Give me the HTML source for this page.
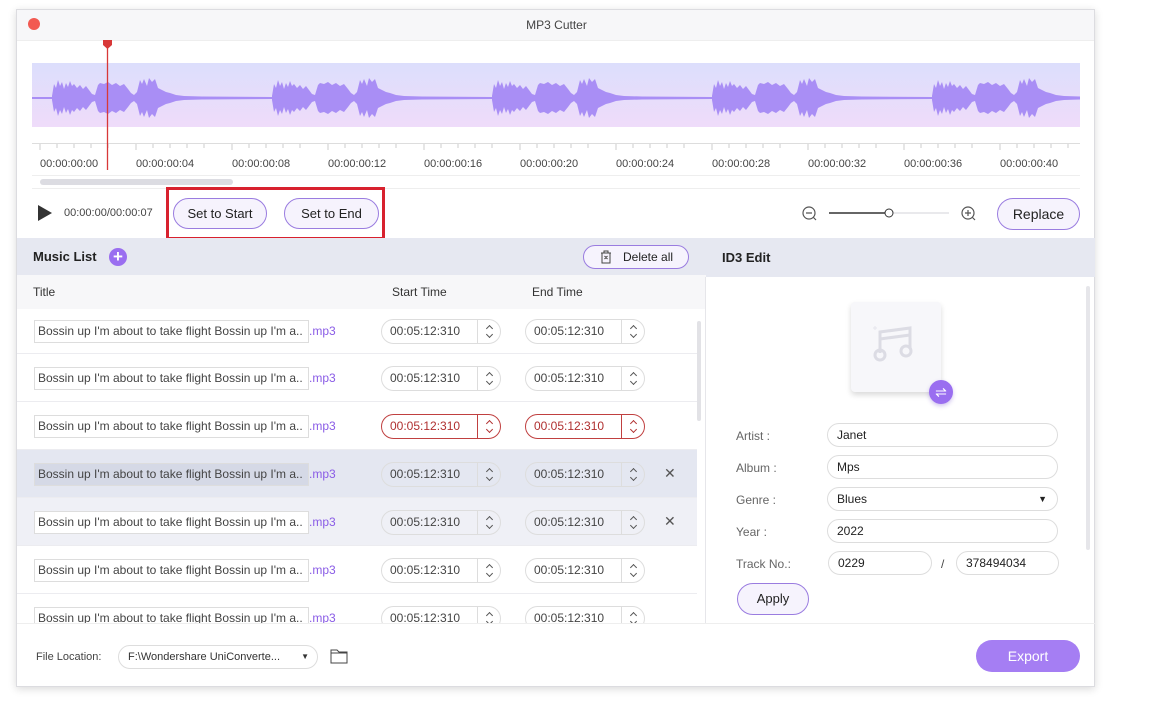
<!DOCTYPE html>
<html><head><meta charset="utf-8"><style>
*{box-sizing:border-box;margin:0;padding:0}
body{width:1152px;height:712px;background:#fff;font-family:"Liberation Sans",sans-serif;position:relative;overflow:hidden;color:#333}
.a{position:absolute}
.win{left:16px;top:9px;width:1079px;height:678px;border:1px solid #dcdce0;box-shadow:0 2px 8px rgba(0,0,0,.15);background:#fff;overflow:hidden}
.btn{position:absolute;border:1px solid #9a7ce0;border-radius:16px;background:#f6f3fd;font-size:13px;color:#222;text-align:center}
.row{position:absolute;left:0;width:680px;height:48px;border-bottom:1px solid #ececf0}
.ti{position:absolute;left:17px;top:11px;width:275px;height:23px;border:1px solid #ddd;background:#fff;font-size:12px;line-height:21px;padding-left:3px;color:#444;white-space:nowrap;overflow:hidden}
.mp{position:absolute;left:292px;top:11px;font-size:12px;line-height:23px;color:#8a5ce6}
.sp{position:absolute;top:10px;width:120px;height:25px;border:1px solid #ddd;border-radius:13px;background:#fff;font-size:12px;line-height:23px;padding-left:8px;color:#444}
.sp:after{content:"";position:absolute;left:95px;top:0;height:23px;border-left:1px solid #ddd}
.sp i{position:absolute;right:7px;top:5px;width:8px;height:13px;background:url('data:,') ;}
.sp i:before,.sp i:after{content:"";position:absolute;left:2px;width:4px;height:4px;border-left:1.5px solid #555;border-top:1.5px solid #555}
.sp i:before{top:1px;transform:rotate(45deg)}
.sp i:after{top:7px;transform:rotate(225deg)}
.sp.r{border-color:#c04040;color:#b03030}.sp.r:after{border-color:#c04040}.sp.r i:before,.sp.r i:after{border-color:#b03030}
.x{position:absolute;left:647px;top:13px;font-size:14px;color:#555}
.lb{position:absolute;left:736px;font-size:12px;color:#666}
.in{position:absolute;height:24px;border:1px solid #ddd;border-radius:12px;font-size:12px;line-height:22px;padding-left:9px;color:#222;background:#fff}
</style></head><body>
<div class="a win">
 <div class="a" style="left:0;top:0;width:1079px;height:31px;background:#f7f7f9;border-bottom:1px solid #eee"></div>
 <div class="a" style="left:11px;top:8px;width:12px;height:12px;border-radius:50%;background:#f25a52"></div>
 <div class="a" style="left:0;top:8px;width:1079px;text-align:center;font-size:12px;color:#444">MP3 Cutter</div>
</div>
<svg class="a" style="left:0;top:0" width="1152" height="240">
 <defs>
  <linearGradient id="g" x1="0" y1="0" x2="0" y2="1"><stop offset="0" stop-color="#dcdefc"/><stop offset="1" stop-color="#efdcfa"/></linearGradient>
  <clipPath id="c"><rect x="32" y="63" width="1048" height="64"/></clipPath>
  <path id="h" d="M0,0 L0,-2 2,-14 4,-10 6,-18 8,-12 10,-16 12,-9 14,-15 16,-11 18,-17 20,-12 22,-14 25,-10 28,-13 31,-9 34,-12 37,-8 40,-4 43,-3 46,-13 48,-15 52,-14 56,-16 60,-13 64,-15 68,-12 72,-14 76,-9 79,-5 82,-3 85,-6 88,-18 90,-14 92,-19 95,-12 97,-20 100,-16 103,-19 106,-10 110,-8 114,-6 118,-5 124,-3 132,-2 150,-1.5 220,-1 220,0 Z" fill="#a98ef5"/>
  <g id="p"><use href="#h"/><use href="#h" transform="scale(1,-1)"/></g>
 </defs>
 <rect x="32" y="63" width="1048" height="64" fill="url(#g)"/>
 <g clip-path="url(#c)">
 <rect x="32" y="97" width="1048" height="2" fill="#a98ef5"/>
 <use href="#p" transform="translate(52,98)"/>
 <use href="#p" transform="translate(272,98)"/>
 <use href="#p" transform="translate(492,98)"/>
 <use href="#p" transform="translate(712,98)"/>
 <use href="#p" transform="translate(932,98)"/>
 </g>
 <line x1="32" y1="143.5" x2="1080" y2="143.5" stroke="#ddd"/>
 <g stroke="#ccc">
  <path d="M40,144v6M57,144v4M74,144v4M91,144v4M108,144v4M136,144v6M153,144v4M170,144v4M187,144v4M204,144v4M232,144v6M249,144v4M266,144v4M283,144v4M300,144v4M328,144v6M345,144v4M362,144v4M379,144v4M396,144v4M424,144v6M441,144v4M458,144v4M475,144v4M492,144v4M520,144v6M537,144v4M554,144v4M571,144v4M588,144v4M616,144v6M633,144v4M650,144v4M667,144v4M684,144v4M712,144v6M729,144v4M746,144v4M763,144v4M780,144v4M808,144v6M825,144v4M842,144v4M859,144v4M876,144v4M904,144v6M921,144v4M938,144v4M955,144v4M972,144v4M1000,144v6M1017,144v4M1034,144v4M1051,144v4M1068,144v4"/>
 </g>
 <g font-family="Liberation Sans" font-size="11" fill="#444">
  <text x="40" y="167">00:00:00:00</text><text x="136" y="167">00:00:00:04</text><text x="232" y="167">00:00:00:08</text><text x="328" y="167">00:00:00:12</text><text x="424" y="167">00:00:00:16</text><text x="520" y="167">00:00:00:20</text><text x="616" y="167">00:00:00:24</text><text x="712" y="167">00:00:00:28</text><text x="808" y="167">00:00:00:32</text><text x="904" y="167">00:00:00:36</text><text x="1000" y="167">00:00:00:40</text>
 </g>
 <line x1="32" y1="175.5" x2="1080" y2="175.5" stroke="#eee"/>
 <rect x="40" y="179" width="193" height="6" rx="3" fill="#dcdce2"/>
 <line x1="32" y1="188.5" x2="1080" y2="188.5" stroke="#eee"/>
 <line x1="107.5" y1="44" x2="107.5" y2="170" stroke="#d83838" stroke-width="1.3"/>
 <path d="M103,40h9v5l-4.5,4l-4.5,-4z" fill="#d83838"/>
 <path d="M38,205l14,8l-14,8z" fill="#333"/>
 <circle cx="809" cy="213" r="6" fill="none" stroke="#555" stroke-width="1.2"/><path d="M806,213h6M813,217l3,3" stroke="#555" stroke-width="1.2"/>
 <line x1="829" y1="213" x2="889" y2="213" stroke="#333" stroke-width="1.5"/><line x1="889" y1="213" x2="949" y2="213" stroke="#e2e2e6" stroke-width="1.5"/>
 <circle cx="889" cy="213" r="4" fill="#fff" stroke="#333"/>
 <circle cx="968" cy="213" r="6" fill="none" stroke="#555" stroke-width="1.2"/><path d="M965,213h6M968,210v6M972,217l3,3" stroke="#555" stroke-width="1.2"/>
</svg>
<div class="a" style="left:64px;top:207px;font-size:11px;color:#444">00:00:00/00:00:07</div>
<div class="btn" style="left:173px;top:198px;width:94px;height:31px;line-height:29px">Set to Start</div>
<div class="btn" style="left:284px;top:198px;width:95px;height:31px;line-height:29px">Set to End</div>
<div class="a" style="left:166px;top:187px;width:219px;height:53px;border:3px solid #d8212e"></div>
<div class="btn" style="left:997px;top:198px;width:83px;height:32px;line-height:30px;font-size:14px">Replace</div>

<div class="a" style="left:17px;top:238px;width:689px;height:37px;background:#e6e8f1"></div>
<div class="a" style="left:33px;top:249px;font-size:13px;font-weight:bold;color:#222">Music List</div>
<div class="a" style="left:109px;top:248px;width:18px;height:18px;border-radius:50%;background:#9a6ef0;color:#fff;font-size:17px;line-height:18px;text-align:center;font-weight:bold">+</div>
<div class="a" style="left:583px;top:245px;width:106px;height:24px;border:1.5px solid #9a7ce0;border-radius:12px;background:#f6f3fd;font-size:12px;line-height:22px;padding-left:39px;color:#222">Delete all</div>
<svg class="a" style="left:600px;top:250px" width="12" height="14"><path d="M1,3h10M4,3V1h4v2M2,3v10h8V3M4.5,6l3,3M7.5,6l-3,3" stroke="#444" fill="none"/></svg>
<div class="a" style="left:17px;top:275px;width:689px;height:34px;background:#f7f7f9"></div>
<div class="a" style="left:33px;top:285px;font-size:12px;color:#333">Title</div>
<div class="a" style="left:392px;top:285px;font-size:12px;color:#333">Start Time</div>
<div class="a" style="left:532px;top:285px;font-size:12px;color:#333">End Time</div>

<div class="a" style="left:17px;top:309px;width:689px;height:314px;overflow:hidden">
 <div class="row" style="top:0;height:45px"><div class="ti">Bossin up I'm about to take flight Bossin up I'm a..</div><div class="mp">.mp3</div><div class="sp" style="left:364px">00:05:12:310<i></i></div><div class="sp" style="left:508px">00:05:12:310<i></i></div></div>
 <div class="row" style="top:45px"><div class="ti" style="top:13px">Bossin up I'm about to take flight Bossin up I'm a..</div><div class="mp" style="top:13px">.mp3</div><div class="sp" style="left:364px;top:12px">00:05:12:310<i></i></div><div class="sp" style="left:508px;top:12px">00:05:12:310<i></i></div></div>
 <div class="row" style="top:93px"><div class="ti" style="top:13px">Bossin up I'm about to take flight Bossin up I'm a..</div><div class="mp" style="top:13px">.mp3</div><div class="sp r" style="left:364px;top:12px">00:05:12:310<i></i></div><div class="sp r" style="left:508px;top:12px">00:05:12:310<i></i></div></div>
 <div class="row" style="top:141px;background:#e4e7f1"><div class="ti" style="top:13px;background:#d5d9e6">Bossin up I'm about to take flight Bossin up I'm a..</div><div class="mp" style="top:13px">.mp3</div><div class="sp" style="left:364px;top:12px;background:#e4e7f1">00:05:12:310<i></i></div><div class="sp" style="left:508px;top:12px;background:#e4e7f1">00:05:12:310<i></i></div><div class="x" style="top:15px">✕</div></div>
 <div class="row" style="top:189px;background:#eff0f6"><div class="ti" style="top:13px">Bossin up I'm about to take flight Bossin up I'm a..</div><div class="mp" style="top:13px">.mp3</div><div class="sp" style="left:364px;top:12px;background:#eff0f6">00:05:12:310<i></i></div><div class="sp" style="left:508px;top:12px;background:#eff0f6">00:05:12:310<i></i></div><div class="x" style="top:15px">✕</div></div>
 <div class="row" style="top:237px"><div class="ti" style="top:13px">Bossin up I'm about to take flight Bossin up I'm a..</div><div class="mp" style="top:13px">.mp3</div><div class="sp" style="left:364px;top:12px">00:05:12:310<i></i></div><div class="sp" style="left:508px;top:12px">00:05:12:310<i></i></div></div>
 <div class="row" style="top:285px"><div class="ti" style="top:13px">Bossin up I'm about to take flight Bossin up I'm a..</div><div class="mp" style="top:13px">.mp3</div><div class="sp" style="left:364px;top:12px">00:05:12:310<i></i></div><div class="sp" style="left:508px;top:12px">00:05:12:310<i></i></div></div>
 <div class="a" style="left:680px;top:12px;width:4px;height:100px;border-radius:2px;background:#e2e2e6"></div>
</div>

<div class="a" style="left:706px;top:238px;width:389px;height:39px;background:#e6e8f1"></div>
<div class="a" style="left:722px;top:250px;font-size:13px;font-weight:bold;color:#222">ID3 Edit</div>
<div class="a" style="left:705px;top:277px;width:1px;height:346px;background:#e6e6ea"></div>
<div class="a" style="left:1086px;top:286px;width:4px;height:264px;border-radius:2px;background:#e6e6ea"></div>
<div class="a" style="left:851px;top:302px;width:90px;height:90px;border-radius:4px;background:#f7f7fa;box-shadow:0 3px 6px rgba(0,0,0,.15)"></div>
<svg class="a" style="left:868px;top:320px" width="60" height="50"><path d="M12,33V12l30,-4v21" stroke="#dcdce4" stroke-width="3" fill="none"/><path d="M12,19l30,-4" stroke="#dcdce4" stroke-width="3"/><circle cx="12" cy="35" r="5" fill="none" stroke="#dcdce4" stroke-width="3"/><circle cx="38" cy="31" r="5" fill="none" stroke="#dcdce4" stroke-width="3"/><path d="M7,6v4M5,8h4" stroke="#e6e6ec"/></svg>
<div class="a" style="left:929px;top:380px;width:24px;height:24px;border-radius:50%;background:#9a6ef0;color:#fff;font-size:14px;line-height:24px;text-align:center;box-shadow:0 2px 4px rgba(100,60,200,.3)">⇌</div>
<div class="lb" style="top:429px">Artist :</div><div class="in" style="left:827px;top:423px;width:231px">Janet</div>
<div class="lb" style="top:461px">Album :</div><div class="in" style="left:827px;top:455px;width:231px">Mps</div>
<div class="lb" style="top:493px">Genre :</div><div class="in" style="left:827px;top:487px;width:231px">Blues<span style="position:absolute;right:10px;font-size:9px">▼</span></div>
<div class="lb" style="top:525px">Year :</div><div class="in" style="left:827px;top:519px;width:231px">2022</div>
<div class="lb" style="top:557px">Track No.:</div><div class="in" style="left:828px;top:551px;width:104px">0229</div>
<div class="a" style="left:941px;top:557px;font-size:12px;color:#444">/</div>
<div class="in" style="left:956px;top:551px;width:103px">378494034</div>
<div class="btn" style="left:737px;top:583px;width:72px;height:32px;line-height:30px">Apply</div>

<div class="a" style="left:17px;top:623px;width:1078px;height:1px;background:#eee"></div>
<div class="a" style="left:36px;top:651px;font-size:11px;color:#444">File Location:</div>
<div class="a" style="left:118px;top:645px;width:200px;height:24px;border:1px solid #ddd;border-radius:12px;font-size:11px;line-height:22px;padding-left:9px;color:#333">F:\Wondershare UniConverte...<span style="position:absolute;right:8px;font-size:8px">▼</span></div>
<svg class="a" style="left:330px;top:648px" width="18" height="16"><path d="M1,2h6l2,2h8v11H1z M1,5h16" stroke="#444" fill="none"/></svg>
<div class="a" style="left:976px;top:640px;width:104px;height:32px;border-radius:16px;background:#a57ef3;color:#fff;font-size:14px;line-height:32px;text-align:center">Export</div>
</body></html>
